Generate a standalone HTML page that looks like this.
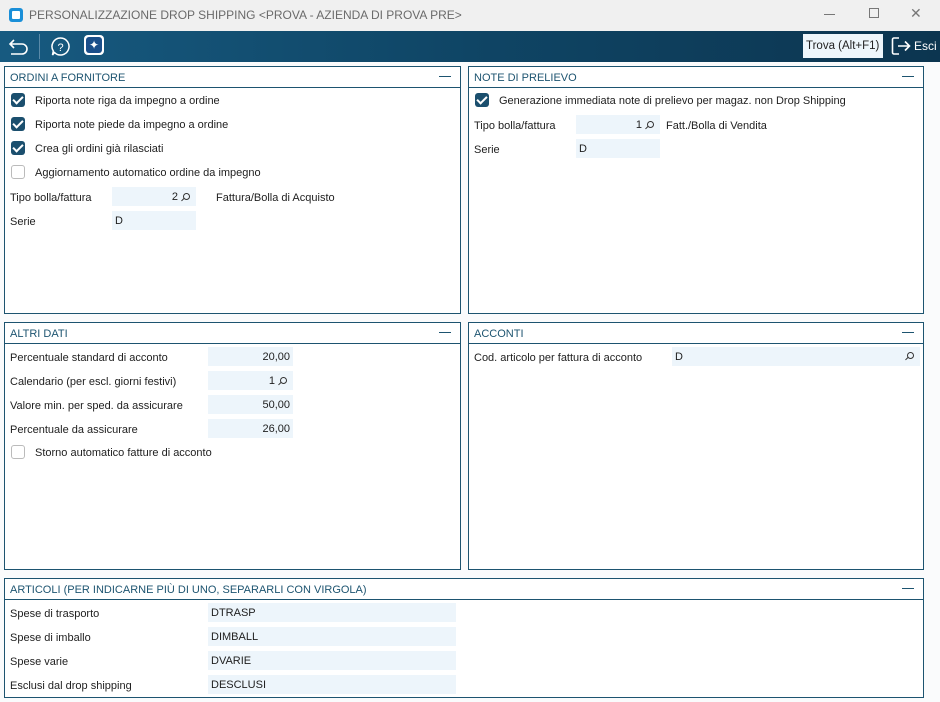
<!DOCTYPE html>
<html><head><meta charset="utf-8"><style>
*{box-sizing:border-box;margin:0;padding:0}
body{width:940px;height:702px;overflow:hidden;background:#fafbfc;font-family:"Liberation Sans",Tahoma,sans-serif;font-size:11px;color:#1e1e1e;position:relative}
.tb{position:absolute;left:0;top:0;width:940px;height:31px;background:#f0f0f0}
.tb .t{position:absolute;left:29px;top:8px;font-size:12px;color:#6a6a6a}
.tool{position:absolute;left:0;top:31px;width:940px;height:31px;background:linear-gradient(90deg,#175a80,#0f4565 50%,#0c3550)}
.p{position:absolute;border:1px solid #1d5470;background:#fff}
.ph{height:21px;border-bottom:1px solid #1d5470;color:#1d5470;padding:5px 0 0 5px;font-size:11px;position:relative}
.ph:after{content:"";position:absolute;right:9px;top:9px;width:12px;height:1px;background:#1d5470}
.a{position:absolute;white-space:nowrap;margin-top:1px}
.cb{position:absolute;width:14px;height:14px;border-radius:3px;background:#1b4f6e}
.cb:after{content:"";position:absolute;left:4px;top:1px;width:4px;height:8px;border:solid #fff;border-width:0 2px 2px 0;transform:rotate(45deg)}
.cb.o{background:#fff;border:1px solid #bbb}
.cb.o:after{display:none}
.f{position:absolute;height:19px;background:#edf5fb;padding:4px 3px 0;white-space:nowrap}
.r{text-align:right}
.mg{display:inline-block;width:7px;height:7px;border:1.3px solid #333;border-radius:50%;position:relative;margin-left:5px}
.mg:after{content:"";position:absolute;left:-3px;top:5px;width:4px;height:1.3px;background:#333;transform:rotate(-45deg)}
</style></head><body>
<div class="tb">
<div style="position:absolute;left:9px;top:8px;width:14px;height:14px;border-radius:3px;background:#1a8fd8"><div style="position:absolute;left:3px;top:3px;width:8px;height:8px;background:#fff;border-radius:1px"></div></div>
<div class="t">PERSONALIZZAZIONE DROP SHIPPING &lt;PROVA - AZIENDA DI PROVA PRE&gt;</div>
<div style="position:absolute;left:824px;top:14px;width:11px;height:1px;background:#777"></div>
<div style="position:absolute;left:869px;top:8px;width:10px;height:10px;border:1px solid #777"></div>
<div style="position:absolute;left:910px;top:5px;font-size:14px;color:#777">✕</div>
</div>
<div class="tool">
<svg style="position:absolute;left:8px;top:6px" width="22" height="20" viewBox="0 0 22 20" fill="none" stroke="#fff" stroke-width="1.6"><path d="M6 3 L2 7 L6 11 M2 7 H14 a5 5 0 0 1 0 10 H3"/></svg>
<div style="position:absolute;left:39px;top:3px;width:1px;height:25px;background:#5a8aa8"></div>
<svg style="position:absolute;left:50px;top:5px" width="21" height="21" viewBox="0 0 21 21"><path d="M10.5 2 a8.5 8.5 0 1 1 -6 14.5 L2.5 19 L3.3 15 A8.5 8.5 0 0 1 10.5 2z" fill="none" stroke="#fff" stroke-width="1.5"/><text x="10.5" y="15" font-size="11" fill="#fff" text-anchor="middle" font-family="Liberation Sans">?</text></svg>
<div style="position:absolute;left:84px;top:4px;width:20px;height:20px;border-radius:4px;background:#fff;padding:2px"><div style="width:16px;height:16px;background:#1b4f8a;border-radius:3px;color:#fff;font-size:12px;text-align:center;line-height:16px">✦</div></div>
<div style="position:absolute;left:803px;top:3px;width:80px;height:24px;background:#eef6fb;color:#222;font-size:11.5px;padding:6px 0 0 3px">Trova (Alt+F1)</div>
<svg style="position:absolute;left:891px;top:5px" width="22" height="20" viewBox="0 0 22 20" fill="none" stroke="#fff" stroke-width="1.6"><path d="M8 2 H3 a1.5 1.5 0 0 0 -1.5 1.5 v13 a1.5 1.5 0 0 0 1.5 1.5 H8 M7 10 H18 M14 5.5 L18.5 10 L14 14.5"/></svg>
<div style="position:absolute;left:914px;top:8px;color:#fff;font-size:12px">Esci</div>
</div>

<div class="p" style="left:4px;top:66px;width:457px;height:248px"><div class="ph">ORDINI A FORNITORE</div></div>
<div class="p" style="left:468px;top:66px;width:456px;height:248px"><div class="ph">NOTE DI PRELIEVO</div></div>
<div class="p" style="left:4px;top:322px;width:457px;height:248px"><div class="ph">ALTRI DATI</div></div>
<div class="p" style="left:468px;top:322px;width:456px;height:248px"><div class="ph">ACCONTI</div></div>
<div class="p" style="left:4px;top:578px;width:920px;height:120px"><div class="ph">ARTICOLI (PER INDICARNE PIÙ DI UNO, SEPARARLI CON VIRGOLA)</div></div>

<div class="cb" style="left:11px;top:93px"></div><div class="a" style="left:35px;top:94px">Riporta note riga da impegno a ordine</div>
<div class="cb" style="left:11px;top:117px"></div><div class="a" style="left:35px;top:118px">Riporta note piede da impegno a ordine</div>
<div class="cb" style="left:11px;top:141px"></div><div class="a" style="left:35px;top:142px">Crea gli ordini già rilasciati</div>
<div class="cb o" style="left:11px;top:165px"></div><div class="a" style="left:35px;top:166px">Aggiornamento automatico ordine da impegno</div>
<div class="a" style="left:10px;top:191px">Tipo bolla/fattura</div>
<div class="f r" style="left:112px;top:187px;width:84px">2<span class="mg"></span>&nbsp;</div>
<div class="a" style="left:216px;top:191px">Fattura/Bolla di Acquisto</div>
<div class="a" style="left:10px;top:215px">Serie</div>
<div class="f" style="left:112px;top:211px;width:84px">D</div>

<div class="cb" style="left:475px;top:93px"></div><div class="a" style="left:499px;top:94px">Generazione immediata note di prelievo per magaz. non Drop Shipping</div>
<div class="a" style="left:474px;top:119px">Tipo bolla/fattura</div>
<div class="f r" style="left:576px;top:115px;width:84px">1<span class="mg"></span>&nbsp;</div>
<div class="a" style="left:666px;top:119px">Fatt./Bolla di Vendita</div>
<div class="a" style="left:474px;top:143px">Serie</div>
<div class="f" style="left:576px;top:139px;width:84px">D</div>

<div class="a" style="left:10px;top:351px">Percentuale standard di acconto</div>
<div class="f r" style="left:208px;top:347px;width:85px">20,00</div>
<div class="a" style="left:10px;top:375px">Calendario (per escl. giorni festivi)</div>
<div class="f r" style="left:208px;top:371px;width:85px">1<span class="mg"></span>&nbsp;</div>
<div class="a" style="left:10px;top:399px">Valore min. per sped. da assicurare</div>
<div class="f r" style="left:208px;top:395px;width:85px">50,00</div>
<div class="a" style="left:10px;top:423px">Percentuale da assicurare</div>
<div class="f r" style="left:208px;top:419px;width:85px">26,00</div>
<div class="cb o" style="left:11px;top:445px"></div><div class="a" style="left:35px;top:446px">Storno automatico fatture di acconto</div>

<div class="a" style="left:474px;top:351px">Cod. articolo per fattura di acconto</div>
<div class="f" style="left:672px;top:347px;width:248px">D<span class="mg" style="position:absolute;right:6px;top:5px"></span></div>

<div class="a" style="left:10px;top:607px">Spese di trasporto</div><div class="f" style="left:208px;top:603px;width:248px">DTRASP</div>
<div class="a" style="left:10px;top:631px">Spese di imballo</div><div class="f" style="left:208px;top:627px;width:248px">DIMBALL</div>
<div class="a" style="left:10px;top:655px">Spese varie</div><div class="f" style="left:208px;top:651px;width:248px">DVARIE</div>
<div class="a" style="left:10px;top:679px">Esclusi dal drop shipping</div><div class="f" style="left:208px;top:675px;width:248px">DESCLUSI</div>
</body></html>
